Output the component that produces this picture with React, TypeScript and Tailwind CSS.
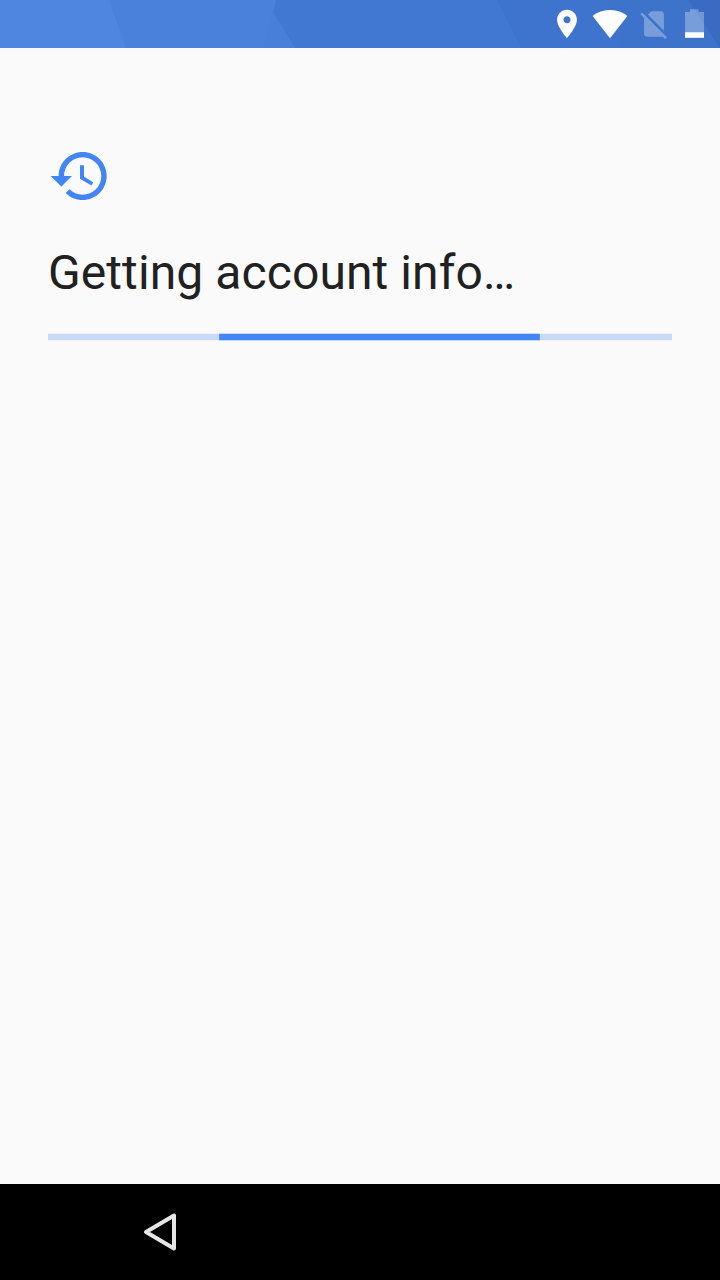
import React from 'react';

const StatusBar: React.FC = () => (
  <header className="relative h-12 shrink-0 overflow-hidden bg-[#4178d1]">
    <svg className="absolute inset-0" width="720" height="48" viewBox="0 0 720 48" aria-hidden="true">
      <path d="M0 0h276l-3 12 22 36H0z" fill="#487fd9" />
      <path d="M0 0h276l-13 48H0z" fill="#4a81da" />
      <path d="M0 0h109l17 48H0z" fill="#4f87e0" />
      <path d="M497 0h223v48H521z" fill="#3e74cd" />
      <path d="M608 0h112v48h-96z" fill="#3d73cb" />
      <path d="M688 0h32v48z" fill="#386bc1" />
    </svg>
    <div className="relative flex h-full text-white">
      <svg className="mt-[7px] ml-[550px] shrink-0" width="34" height="34" viewBox="0 0 24 24" fill="currentColor">
        <path d="M12 2C8.13 2 5 5.13 5 9c0 5.25 7 13 7 13s7-7.75 7-13c0-3.87-3.13-7-7-7zm0 9.5c-1.38 0-2.5-1.12-2.5-2.5s1.12-2.5 2.5-2.5 2.5 1.12 2.5 2.5-1.12 2.5-2.5 2.5z" />
      </svg>
      <svg className="ml-2 shrink-0" width="36" height="48" viewBox="0 0 36 48" fill="currentColor">
        <path d="M18 38.2 .6 15.9C2 14.8 8.5 9.9 18 9.9s16 4.9 17.4 6z" />
      </svg>
      <svg className="mt-[7px] ml-[9px] shrink-0 opacity-30" width="34" height="34" viewBox="0 0 24 24" fill="currentColor">
        <path d="M18.99 5c0-1.1-.89-2-1.99-2h-7L7.66 5.34 19 16.68 18.99 5zM3.65 3.88L2.38 5.15 5 7.77V19c0 1.1.9 2 2 2h10.01c.35 0 .67-.1.96-.26l1.88 1.88 1.27-1.27L3.65 3.88z" />
      </svg>
      <svg className="ml-[13px] shrink-0" width="22" height="48" viewBox="0 0 22 48" fill="currentColor">
        <path d="M6 9.2h8.6V12H20v20.2H1V12h5z" fillOpacity="0.3" />
        <path d="M1 32.2h19v5.6H1z" />
      </svg>
    </div>
  </header>
);

const ProgressBar: React.FC = () => (
  <svg className="mt-8 block" width="624" height="8" viewBox="0 0 624 8" role="progressbar" aria-label="Loading">
    <path d="M0 .67h624v6.66H0z" fill="#c9daf7" />
    <path d="M171.2 .67h320.6v6.66H171.2z" fill="#4285f4" />
  </svg>
);

const App: React.FC = () => {
  return (
    <div className="flex h-[1280px] w-[720px] flex-col overflow-hidden bg-[#fafafa] font-['Roboto',sans-serif]">
      <StatusBar />
      <main className="flex-1 px-12 pt-24">
        <svg className="block text-[#4285f4]" width="64" height="64" viewBox="0 0 24 24" fill="currentColor">
          <path d="M13 3c-4.97 0-9 4.03-9 9H1l3.89 3.89.07.14L9 12H6c0-3.87 3.13-7 7-7s7 3.13 7 7-3.13 7-7 7c-1.93 0-3.68-.79-4.94-2.06l-1.42 1.42C8.27 19.99 10.51 21 13 21c4.97 0 9-4.03 9-9s-4.03-9-9-9zm-1 5v5l4.28 2.54.72-1.21-3.5-2.08V8H12z" />
        </svg>
        <h1 className="mt-[37px] text-[48px] leading-[56px] tracking-[0.09px] whitespace-nowrap text-[#212121]">
          Getting account info…
        </h1>
        <ProgressBar />
      </main>
      <nav className="h-24 shrink-0 bg-black">
        <button className="ml-[140px] flex h-full w-10 items-center" aria-label="Back">
          <svg width="40" height="48" viewBox="0 0 40 48" fill="none" stroke="#e6e6e6" strokeWidth="4" strokeLinejoin="round">
            <path d="M6 24 34 7.5v33z" />
          </svg>
        </button>
      </nav>
    </div>
  );
};

export default App;
